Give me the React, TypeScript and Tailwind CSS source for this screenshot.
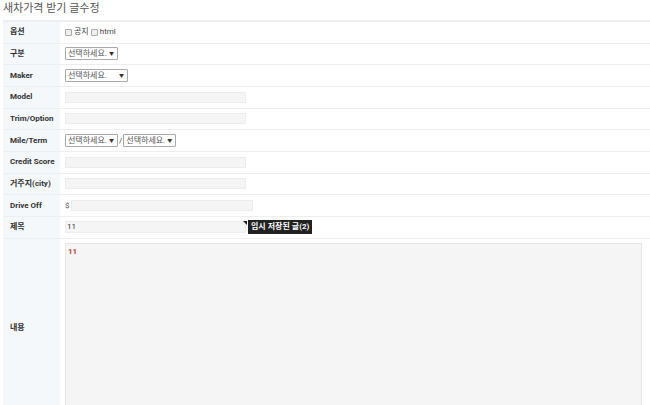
import React from 'react';

const Sel = ({ w }: { w: string }) => (
  <div className={`${w} h-[13px] border border-[#a9a9a9] rounded-[1px] bg-white flex items-center justify-between px-[2px] text-[8px] text-[#555]`}>
    <span>선택하세요.</span>
    <span className="text-[5px] pr-[1px] text-[#333]">▼</span>
  </div>
);

const Inp = ({ w = 'w-[181px]' }: { w?: string }) => (
  <div className={`${w} h-[11px] bg-[#f5f5f5] border border-[#ececec]`} />
);

const Row = ({ label, children }: { label: string; children?: React.ReactNode }) => (
  <div className="flex h-[21.67px] border-b border-[#eeeeee]">
    <div className="w-[57px] shrink-0 bg-[#f5f8fa] flex items-center pl-[7px] text-[8px] font-bold text-[#333]">
      {label}
    </div>
    <div className="flex-1 flex items-center pl-[5px]">{children}</div>
  </div>
);

const Check = ({ label }: { label: string }) => (
  <span className="flex items-center gap-[2px] mr-[2px]">
    <span className="w-[7px] h-[7px] border border-[#aaa] bg-[#f0f0f0] rounded-[1px]" />
    <span>{label}</span>
  </span>
);

export default function App() {
  return (
    <div className="w-[650px] h-[405px] overflow-hidden bg-white font-['Roboto','Noto_Sans_CJK_KR',sans-serif]">
      <div className="h-[20px] pl-[3px] pt-[2px] text-[11px] leading-[14px] text-[#555]">새차가격 받기 글수정</div>
      <div className="ml-[3px] border-t-2 border-[#eeeeee]">
        <Row label="옵션">
          <div className="flex items-center text-[8px] text-[#444]">
            <Check label="공지" />
            <Check label="html" />
          </div>
        </Row>
        <Row label="구분">
          <Sel w="w-[53px]" />
        </Row>
        <Row label="Maker">
          <Sel w="w-[63px]" />
        </Row>
        <Row label="Model">
          <Inp />
        </Row>
        <Row label="Trim/Option">
          <Inp />
        </Row>
        <Row label="Mile/Term">
          <div className="flex items-center gap-[1px] text-[8px] text-[#444]">
            <Sel w="w-[53px]" />
            <span>/</span>
            <Sel w="w-[53px]" />
          </div>
        </Row>
        <Row label="Credit Score">
          <Inp />
        </Row>
        <Row label="거주지(city)">
          <Inp />
        </Row>
        <Row label="Drive Off">
          <span className="text-[8px] text-[#555] mr-[1px]">$</span>
          <Inp w="w-[182px]" />
        </Row>
        <Row label="제목">
          <div className="relative w-[181px] h-[12px] bg-[#f5f5f5] border border-[#ececec] text-[8px] leading-[10px] text-[#333] pl-[1px]">
            11
            <svg className="absolute right-[-2px] top-[-1px]" width="4" height="4" viewBox="0 0 4 4">
              <path d="M0 0 L4 0 L4 4 Z" fill="#222" />
            </svg>
          </div>
          <div className="ml-[2px] h-[14px] px-[3px] bg-[#222] text-white text-[8px] font-bold flex items-center">임시 저장된 글(2)</div>
        </Row>
        <div className="flex h-[200px]">
          <div className="w-[57px] shrink-0 bg-[#f5f8fa] flex items-center pl-[7px] text-[8px] font-bold text-[#333] h-[178px]">내용</div>
          <div className="flex-1 pl-[5px] pt-[4px]">
            <div className="w-[577px] h-[180px] bg-[#f5f5f5] border border-[#e6e6e6] pl-[2px] pt-[2px] text-[8px] text-[#b5473a] font-bold">11</div>
          </div>
        </div>
      </div>
    </div>
  );
}
